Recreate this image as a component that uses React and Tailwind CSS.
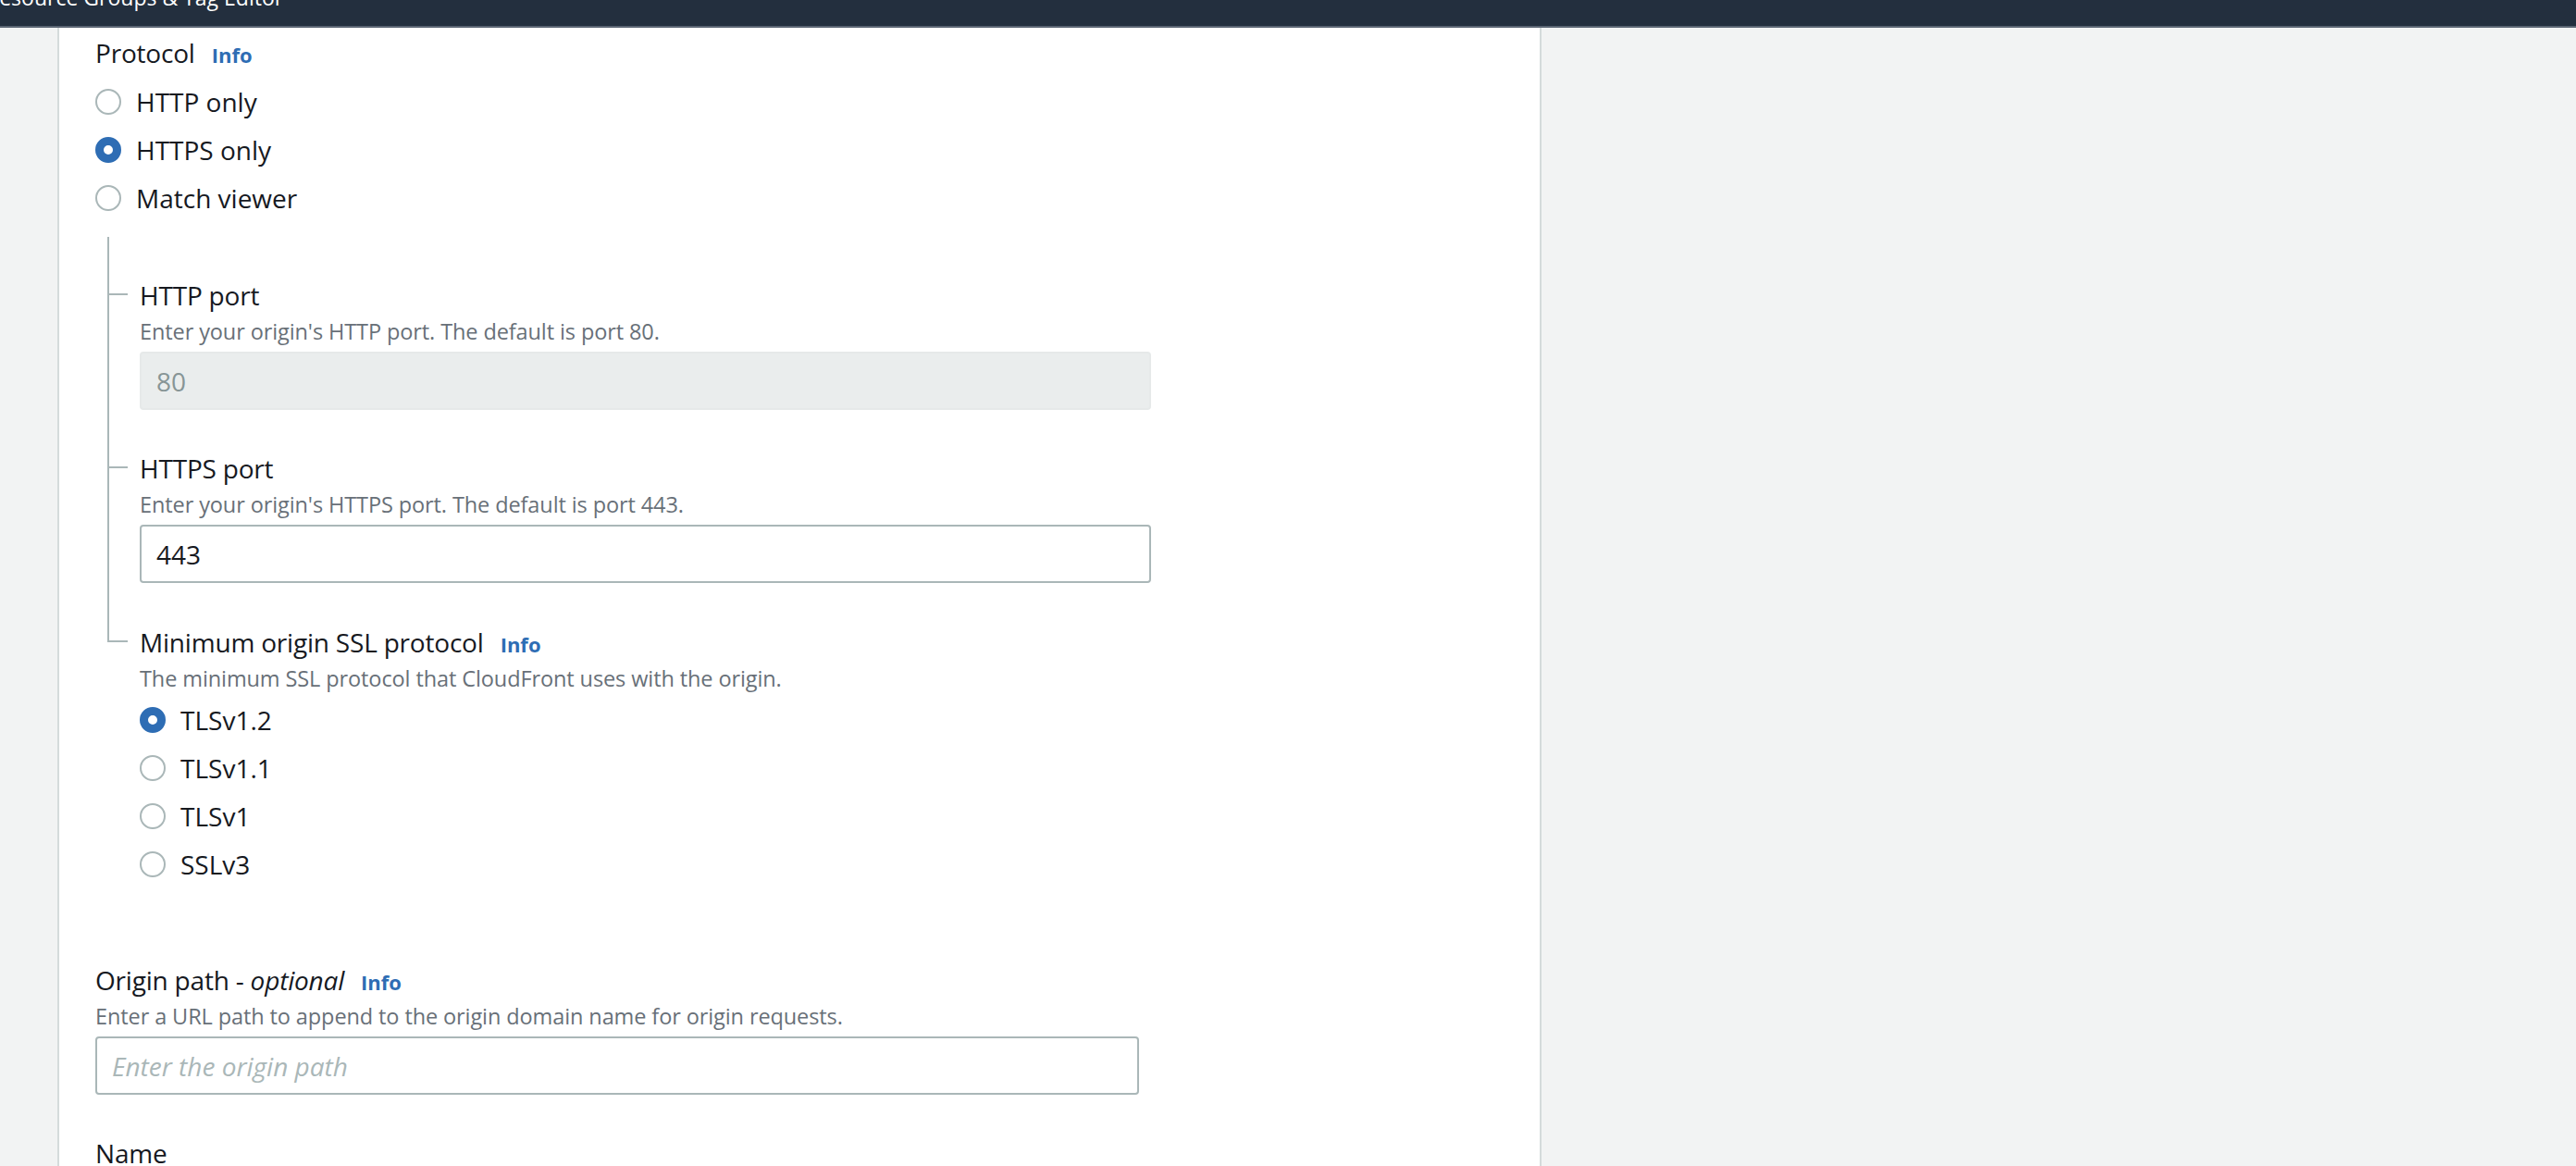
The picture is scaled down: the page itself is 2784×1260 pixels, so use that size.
import React from "react";

const lineColor = "border-[#aab7b8]";

const Radio = ({ checked, label }) => (
  <div className="flex h-[52px] items-center gap-[16px]">
    {checked ? (
      <span className="h-[28px] w-[28px] shrink-0 rounded-full border-[9px] border-[#2e6db4] bg-white" />
    ) : (
      <span className="h-[28px] w-[28px] shrink-0 rounded-full border-2 border-[#aab7b8] bg-white" />
    )}
    <span className="text-[28px] leading-[44px]">{label}</span>
  </div>
);

const Label = ({ children, info }) => (
  <div className="flex h-[44px] items-baseline gap-[18px] text-[28px] leading-[44px]">
    <span className="tracking-[-0.2px]">{children}</span>
    {info && <span className="text-[22px] font-bold text-[#2e6db4]">Info</span>}
  </div>
);

const Desc = ({ children }) => (
  <p className="mt-[1px] text-[23.5px] leading-[32px] tracking-[-0.1px] text-[#687078]">{children}</p>
);

const TextInput = ({ value, placeholder, disabled, width }) => (
  <input
    readOnly
    value={value}
    placeholder={placeholder}
    className={
      disabled
        ? `mt-[6px] block h-[63px] ${width} rounded-[4px] border-2 border-[#e6e9e9] bg-[#eaeded] px-[16px] text-[28px] text-[#879596] outline-none`
        : `mt-[6px] block h-[63px] ${width} rounded-[4px] border-2 border-[#aab7b8] bg-white px-[16px] text-[28px] text-[#16191f] outline-none placeholder:italic placeholder:text-[#aab7b8]`
    }
  />
);

export default function App() {
  return (
    <div className="h-[1260px] overflow-hidden bg-[#f2f3f3] font-['Open_Sans',sans-serif] text-[#16191f]">
      {/* top nav, scrolled mostly out of view */}
      <div className="h-[28px] overflow-hidden bg-[#232f3e]">
        <div className="-mt-[17px] -ml-[15px] whitespace-nowrap text-[23px] leading-[28px] text-white">
          Resource Groups &amp; Tag Editor
        </div>
      </div>
      <div className="h-[2px] bg-[#5b6573]" />

      <div className="flex">
        <div className="w-[62px] shrink-0" />
        <div className="h-[1230px] w-[1604px] shrink-0 border-x-2 border-[#d5dbdb] bg-white pl-[39px] pt-[5px]">
          <Label info>Protocol</Label>
          <div className="mt-[5px]">
            <Radio label="HTTP only" />
            <Radio checked label="HTTPS only" />
            <Radio label="Match viewer" />
          </div>

          {/* nested port settings */}
          <div className="mt-[16px] ml-[13px]">
            <div className={`h-[41px] border-l-2 ${lineColor}`} />

            <div className="flex">
              <div className={`w-[35px] shrink-0 border-l-2 ${lineColor}`}>
                <div className="mt-[20px] h-[2px] w-[20px] bg-[#aab7b8]" />
              </div>
              <div className="pb-[41px]">
                <Label>HTTP port</Label>
                <Desc>Enter your origin's HTTP port. The default is port 80.</Desc>
                <TextInput disabled value="80" width="w-[1093px]" />
              </div>
            </div>

            <div className="flex">
              <div className={`w-[35px] shrink-0 border-l-2 ${lineColor}`}>
                <div className="mt-[20px] h-[2px] w-[20px] bg-[#aab7b8]" />
              </div>
              <div className="pb-[42px]">
                <Label>HTTPS port</Label>
                <Desc>Enter your origin's HTTPS port. The default is port 443.</Desc>
                <TextInput value="443" width="w-[1093px]" />
              </div>
            </div>

            <div className="flex">
              <div className="w-[35px] shrink-0">
                <div className={`h-[22px] w-[22px] border-b-2 border-l-2 ${lineColor}`} />
              </div>
              <div>
                <Label info>Minimum origin SSL protocol</Label>
                <Desc>The minimum SSL protocol that CloudFront uses with the origin.</Desc>
                <div className="mt-[3px]">
                  <Radio checked label="TLSv1.2" />
                  <Radio label="TLSv1.1" />
                  <Radio label="TLSv1" />
                  <Radio label="SSLv3" />
                </div>
              </div>
            </div>
          </div>

          <div className="mt-[77px]">
            <Label info>
              Origin path - <span className="italic">optional</span>
            </Label>
            <Desc>Enter a URL path to append to the origin domain name for origin requests.</Desc>
            <TextInput value="" placeholder="Enter the origin path" width="w-[1128px]" />
          </div>

          <div className="mt-[41px]">
            <Label>Name</Label>
          </div>
        </div>
        <div className="flex-1" />
      </div>
    </div>
  );
}
